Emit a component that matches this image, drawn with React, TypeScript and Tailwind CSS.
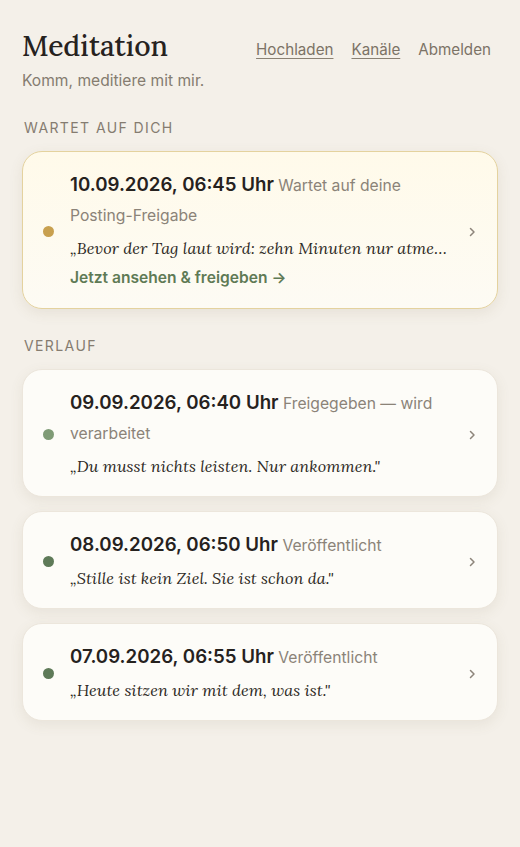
const serif = "font-['Lora','Liberation_Serif','DejaVu_Serif',serif]";

type Entry = {
  date: string;
  status: string;
  quote: string;
  dot: string;
  action?: string;
};

const pending: Entry = {
  date: "10.09.2026, 06:45 Uhr",
  status: "Wartet auf deine Posting-Freigabe",
  quote: "„Bevor der Tag laut wird: zehn Minuten nur atme…",
  dot: "bg-[#c8a04f]",
  action: "Jetzt ansehen & freigeben →",
};

const history: Entry[] = [
  {
    date: "09.09.2026, 06:40 Uhr",
    status: "Freigegeben — wird verarbeitet",
    quote: "„Du musst nichts leisten. Nur ankommen.\"",
    dot: "bg-[#7f9b76]",
  },
  {
    date: "08.09.2026, 06:50 Uhr",
    status: "Veröffentlicht",
    quote: "„Stille ist kein Ziel. Sie ist schon da.\"",
    dot: "bg-[#5e7a58]",
  },
  {
    date: "07.09.2026, 06:55 Uhr",
    status: "Veröffentlicht",
    quote: "„Heute sitzen wir mit dem, was ist.\"",
    dot: "bg-[#5e7a58]",
  },
];

function Chevron() {
  return (
    <svg width="10" height="14" viewBox="0 0 10 14" className="shrink-0">
      <path
        d="M3.5 3.5l3.5 3.5-3.5 3.5"
        fill="none"
        stroke="#8d857b"
        strokeWidth="1.5"
        strokeLinecap="round"
        strokeLinejoin="round"
      />
    </svg>
  );
}

function EntryCard({ entry, highlight }: { entry: Entry; highlight?: boolean }) {
  return (
    <div
      className={
        highlight
          ? "flex items-center rounded-[20px] border border-[#e4d29e] bg-gradient-to-b from-[#fffaea] to-[#fdfbf4] pl-[20px] pr-[20px] pt-[18px] pb-[15px] shadow-[0_4px_14px_rgba(120,100,60,0.10)]"
          : "flex items-center rounded-[20px] border border-[#ece6dc] bg-[#fdfcf8] pl-[20px] pr-[20px] pt-[18px] pb-[15px] shadow-[0_4px_14px_rgba(110,95,70,0.09)]"
      }
    >
      <span className={`h-[11px] w-[11px] shrink-0 rounded-full ${entry.dot}`} />
      <div className="ml-[16px] min-w-0 flex-1">
        <p className="leading-[30px] text-[15.7px] text-[#8b8378]">
          <span className="text-[18.7px] font-semibold text-[#26221e]">{entry.date}</span>{" "}
          {entry.status}
        </p>
        <p className={`${serif} mt-[2px] truncate text-[16.3px] italic leading-[30px] text-[#2e2a25]`}>
          {entry.quote}
        </p>
        {entry.action && (
          <p className="text-[15.6px] font-semibold leading-[30px] text-[#5f7a55]">{entry.action}</p>
        )}
      </div>
      <div className="ml-3 pl-[2px]">
        <Chevron />
      </div>
    </div>
  );
}

export default function App() {
  return (
    <div className="min-h-[847px] bg-[#f4f0e9] px-[22px] pt-[28px] pb-10 font-['Inter','Noto_Sans',sans-serif]">
      <header className="flex items-start justify-between">
        <div>
          <h1 className={`${serif} text-[28.3px] font-medium leading-[36px] text-[#26221e]`}>Meditation</h1>
          <p className="mt-[5px] text-[15.6px] text-[#857c70]">Komm, meditiere mit mir.</p>
        </div>
        <nav className="mt-[11px] mr-[7px] flex gap-[18px] text-[15.2px] text-[#7c7366]">
          <a className="underline underline-offset-[3px] decoration-[#8a8174]">Hochladen</a>
          <a className="underline underline-offset-[3px] decoration-[#8a8174]">Kanäle</a>
          <a>Abmelden</a>
        </nav>
      </header>

      <h2 className="mt-[25px] ml-[2px] text-[14px] tracking-[0.1em] text-[#857c70]">WARTET AUF DICH</h2>
      <div className="mt-[13px]">
        <EntryCard entry={pending} highlight />
      </div>

      <h2 className="mt-[26px] ml-[2px] text-[14px] tracking-[0.1em] text-[#857c70]">VERLAUF</h2>
      <div className="mt-[13px] flex flex-col gap-[14px]">
        {history.map((e) => (
          <EntryCard key={e.date} entry={e} />
        ))}
      </div>
    </div>
  );
}
